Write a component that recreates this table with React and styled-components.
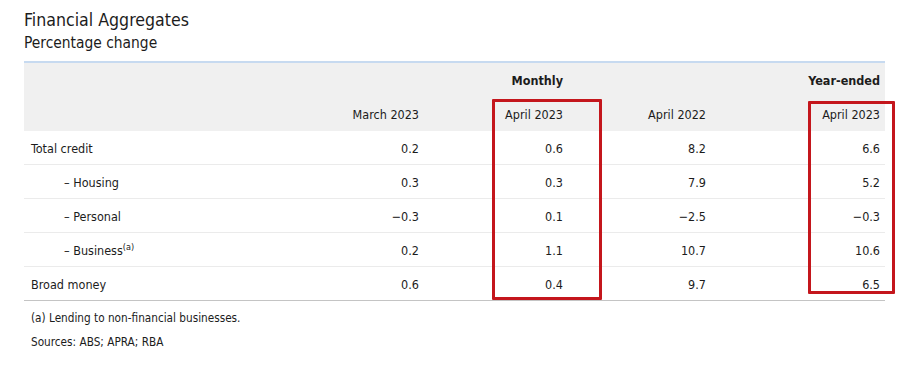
import styled, { createGlobalStyle } from "styled-components";

const GlobalStyle = createGlobalStyle`
  body {
    margin: 0;
    background: #ffffff;
    font-family: "DejaVu Sans Condensed", "Liberation Sans", Arial, sans-serif;
    font-stretch: condensed;
    color: #1c1c1c;
  }
`;

// table data
const rows = [
  { label: "Total credit", values: ["0.2", "0.6", "8.2", "6.6"] },
  { label: "Housing", sub: true, values: ["0.3", "0.3", "7.9", "5.2"] },
  { label: "Personal", sub: true, values: ["\u22120.3", "0.1", "\u22122.5", "\u22120.3"] },
  { label: "Business", sub: true, note: "(a)", values: ["0.2", "1.1", "10.7", "10.6"] },
  { label: "Broad money", values: ["0.6", "0.4", "9.7", "6.5"] }
];

const periods = ["March 2023", "April 2023", "April 2022", "April 2023"];
const colWidths = [256, 144, 144, 143, 174];

const Page = styled.div`
  padding: 9px 0 0 24px;
  width: 861px;
`;

const Title = styled.h1`
  margin: 0;
  font-size: 17.6px;
  line-height: 22px;
  font-weight: normal;
`;

const Subtitle = styled.h2`
  margin: 2px 0 0;
  font-size: 15.4px;
  line-height: 20px;
  font-weight: normal;
`;

const TableWrap = styled.div`
  position: relative;
  margin-top: 8px;
`;

const Table = styled.table`
  width: 861px;
  table-layout: fixed;
  border-collapse: collapse;
  border-top: solid 2px #c7daf0;
  border-bottom: solid 1px #c4c4c4;
  font-size: 12.5px;
`;

const Head = styled.thead`
  background: #f0f0f0;
`;

const HeadCell = styled.th`
  height: 33px;
  padding: 1px 5px 0 0;
  text-align: right;
  font-weight: ${({ $bold }) => ($bold ? "bold" : "normal")};
  vertical-align: middle;
`;

const Row = styled.tr`
  & + & td {
    border-top: solid 1px #ebebeb;
  }
`;

const LabelCell = styled.td`
  height: 31px;
  padding: 2px 0 0 ${({ $sub }) => ($sub ? "40px" : "7px")};
  text-align: left;
`;

const NumCell = styled.td`
  height: 31px;
  padding: 2px 5px 0 0;
  text-align: right;
`;

const Note = styled.sup`
  font-size: 9px;
  vertical-align: 5px;
  line-height: 0;
`;

// red annotation boxes drawn over the table
const Highlight = styled.div`
  position: absolute;
  left: ${({ $left }) => $left}px;
  top: ${({ $top }) => $top}px;
  width: ${({ $width }) => $width}px;
  height: ${({ $height }) => $height}px;
  box-sizing: border-box;
  border: solid 3px #c4161c;
  border-radius: 1px;
  pointer-events: none;
`;

const Notes = styled.div`
  margin-top: 5px;
  padding-left: 7px;
  font-size: 11.7px;
  line-height: 24px;
`;

const App = () => (
  <>
    <GlobalStyle />
    <Page>
      <Title>Financial Aggregates</Title>
      <Subtitle>Percentage change</Subtitle>
      <TableWrap>
        <Table>
          <colgroup>
            {colWidths.map((w, i) => (
              <col key={`col-${i}`} style={{ width: w }} />
            ))}
          </colgroup>
          <Head>
            <tr>
              <HeadCell />
              <HeadCell $bold colSpan={2}>
                Monthly
              </HeadCell>
              <HeadCell $bold colSpan={2}>
                Year-ended
              </HeadCell>
            </tr>
            <tr>
              <HeadCell />
              {periods.map((p, i) => (
                <HeadCell key={`period-${i}`}>{p}</HeadCell>
              ))}
            </tr>
          </Head>
          <tbody>
            {rows.map(({ label, sub, note, values }) => (
              <Row key={label}>
                <LabelCell $sub={sub}>
                  {sub ? `\u2013 ${label}` : label}
                  {note && <Note>{note}</Note>}
                </LabelCell>
                {values.map((v, i) => (
                  <NumCell key={`${label}-${i}`}>{v}</NumCell>
                ))}
              </Row>
            ))}
          </tbody>
        </Table>
        <Highlight $left={468} $top={38} $width={110} $height={201} />
        <Highlight $left={784} $top={40} $width={87} $height={193} />
      </TableWrap>
      <Notes>
        <div>(a) Lending to non-financial businesses.</div>
        <div>Sources: ABS; APRA; RBA</div>
      </Notes>
    </Page>
  </>
);

export default App;
